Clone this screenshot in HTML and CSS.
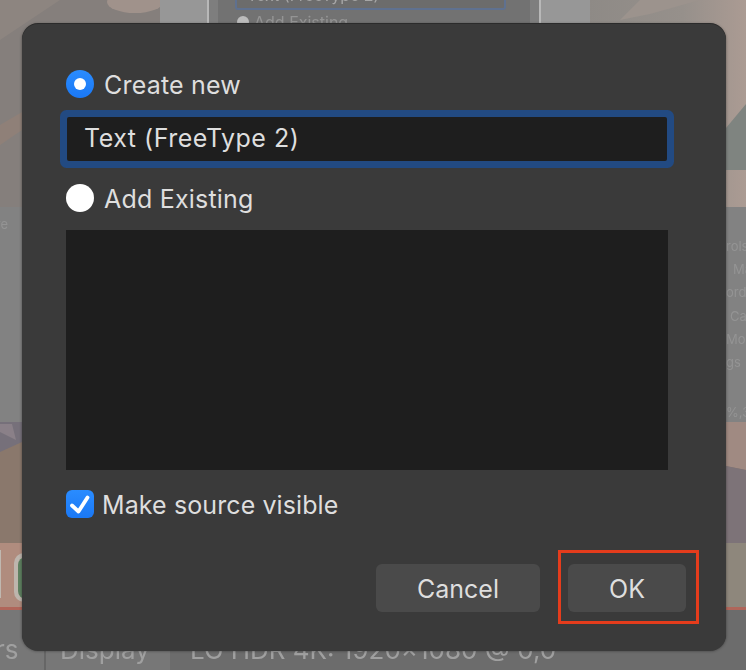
FILE: index.html
```html
<!DOCTYPE html>
<html lang="en">
  <head>
    <meta charset="UTF-8" />
    <meta name="viewport" content="width=device-width, initial-scale=1.0" />
    <title>Create or select source</title>
    <link rel="stylesheet" href="styles.css">
  </head>
  <body>
    <!-- Dimmed window and wallpaper behind the dialog -->
    <div class="backdrop">
      <svg class="wallpaper" width="746" height="670" viewBox="0 0 746 670">
        <defs>
          <linearGradient id="topRight" x1="0" x2="1" y1="0" y2="0">
            <stop offset="0" stop-color="#8e8a86" />
            <stop offset="0.6" stop-color="#96908b" />
            <stop offset="1" stop-color="#ab9b93" />
          </linearGradient>
        </defs>
        <rect width="746" height="670" fill="#8a786c" />
        <rect width="160" height="207" fill="#857f7c" />
        <polygon points="0,0 60,0 0,40" fill="#8d8580" />
        <polygon points="0,125 22,112 22,130 0,145" fill="#8f8078" />
        <ellipse cx="135" cy="2" rx="28" ry="11" fill="#a0928b" />
        <rect x="588" width="158" height="207" fill="url(#topRight)" />
        <polygon points="640,0 700,0 650,14 620,20" fill="#9c938d" />
        <polygon points="726,128 746,104 746,170 726,170" fill="#7f8480" />
        <polygon points="0,422 22,422 22,442 0,452" fill="#76707a" />
        <polygon points="0,424 12,424 16,440 0,432" fill="#8a8088" />
        <polygon points="726,422 746,422 746,470 726,466" fill="#a08a82" />
        <polygon points="726,466 746,470 746,543 726,543" fill="#7d7378" />
        <rect x="726" y="543" width="20" height="65" fill="#8e877c" />
        <rect y="543" width="22" height="65" fill="#b08c7e" />
        <rect y="550" width="1" height="48" fill="#c0b8b0" />
        <rect x="14" y="553" width="22" height="49" rx="10" fill="#bdb5ad" />
        <rect x="18" y="557" width="16" height="42" rx="8" fill="#5e8060" />
      </svg>
      <div class="panel panel-top-left"></div>
      <div class="panel panel-top-mid">
        <div class="ghost-sheet">
          <div class="ghost-input">Text (FreeType 2)</div>
          <div class="ghost-radio"><i></i>Add Existing</div>
        </div>
      </div>
      <div class="panel panel-top-right"></div>
      <div class="panel panel-left"><span class="ghost-re">re</span></div>
      <div class="panel panel-right">
        <span>rols</span>
        <span class="indent-ma">Ma</span>
        <span>ordi</span>
        <span class="indent-car">Car</span>
        <span>Mode</span>
        <span>gs</span>
        <span class="zoom-level">%,3</span>
      </div>
      <div class="red-line"></div>
      <div class="status-bar">
        <span class="status-rs">rs</span>
        <span class="status-display">Display</span>
        <span class="status-monitor">LG HDR 4K: 1920x1080 @ 0,0</span>
      </div>
    </div>

    <div class="dialog">
      <label class="option">
        <span class="radio radio-on"></span>
        <span class="option-text">Create new</span>
      </label>

      <div class="name-input">Text (FreeType 2)</div>

      <label class="option">
        <span class="radio"></span>
        <span class="option-text">Add Existing</span>
      </label>

      <div class="source-list"></div>

      <label class="option option-visible">
        <span class="checkbox">
          <svg width="28" height="28" viewBox="0 0 28 28">
            <path d="M6 15.5 L12.5 21.5 L21.5 7.5" fill="none" stroke="#fff" stroke-width="3.8" stroke-linecap="round" stroke-linejoin="round" />
          </svg>
        </span>
        <span class="option-text">Make source visible</span>
      </label>

      <div class="buttons">
        <button class="btn btn-cancel">Cancel</button>
        <div class="ok-wrap">
          <button class="btn btn-ok">OK</button>
          <!-- Annotation box around the OK button -->
          <div class="highlight"></div>
        </div>
      </div>
    </div>
  </body>
</html>
```

FILE: styles.css
```css
body {
  margin: 0;
  width: 746px;
  height: 670px;
  overflow: hidden;
  position: relative;
  font-family: Inter, "Noto Sans", sans-serif;
  background: #8a786c;
}

/* Everything behind the dialog */
.backdrop {
  position: absolute;
  inset: 0;
  color: #949494;
  filter: blur(0.6px);
}

.wallpaper {
  position: absolute;
  top: 0;
  left: 0;
  display: block;
}

.panel {
  position: absolute;
  background: #7f7f7f;
}

.panel-top-left {
  left: 160px;
  top: 0;
  width: 47px;
  height: 30px;
  background: #979797;
  border-right: 2px solid #b8b8b8;
}

.panel-top-mid {
  left: 209px;
  top: 0;
  width: 330px;
  height: 30px;
  background: #7e7e7e;
  font-size: 16px;
}

.panel-top-right {
  left: 539px;
  top: 0;
  width: 49px;
  height: 30px;
  background: #979797;
  border-left: 2px solid #b8b8b8;
}

.ghost-sheet {
  position: absolute;
  left: 9px;
  top: 0;
  width: 312px;
  height: 30px;
  background: #727272;
}

.ghost-input {
  position: absolute;
  left: 17px;
  top: -20px;
  width: 257px;
  height: 26px;
  border: 2px solid #5f7190;
  border-radius: 3px;
  background: #6c6c6c;
  padding-left: 10px;
  line-height: 26px;
  color: #a6a6a6;
}

.ghost-radio {
  position: absolute;
  left: 19px;
  top: 14px;
  display: flex;
  align-items: center;
  gap: 5px;
  line-height: 16px;
  white-space: nowrap;
}

.ghost-radio i {
  width: 12px;
  height: 12px;
  border-radius: 50%;
  background: #bcbcbc;
}

.panel-left {
  left: 0;
  top: 207px;
  width: 22px;
  height: 215px;
  background: #828282;
  font-size: 13px;
}

.ghost-re {
  position: absolute;
  right: 14px;
  top: 9px;
}

.panel-right {
  left: 726px;
  top: 207px;
  width: 20px;
  height: 215px;
  background: #828282;
  font-size: 13px;
  line-height: 16px;
  display: flex;
  flex-direction: column;
  gap: 7.2px;
  padding-top: 31px;
  box-sizing: border-box;
  white-space: nowrap;
}

.indent-ma {
  margin-left: 7px;
}

.indent-car {
  margin-left: 4px;
}

.zoom-level {
  margin-top: 27px;
}

.red-line {
  position: absolute;
  left: 0;
  top: 607px;
  width: 746px;
  height: 3px;
  background: #b0665a;
}

.status-bar {
  position: absolute;
  left: 0;
  top: 610px;
  width: 746px;
  height: 60px;
  background: #777;
  font-size: 26px;
  line-height: 32px;
  color: #a0a0a0;
}

.status-bar::before {
  content: "";
  position: absolute;
  left: 44px;
  top: 0;
  bottom: 0;
  width: 2px;
  background: #666;
}

.status-bar::after {
  content: "";
  position: absolute;
  left: 170px;
  top: 0;
  right: 0;
  bottom: 0;
  background: #6c6c6c;
}

.status-bar span {
  position: absolute;
  top: 24px;
  white-space: nowrap;
  z-index: 1;
}

.status-rs {
  left: -5px;
}

.status-display {
  left: 60px;
}

.status-monitor {
  left: 190px;
}

/* Dialog */
.dialog {
  position: absolute;
  left: 22px;
  top: 24px;
  width: 704px;
  height: 627px;
  box-sizing: border-box;
  padding: 46px 40px 39px 44px;
  display: flex;
  flex-direction: column;
  background: #3a3a3a;
  border-radius: 16px;
  box-shadow: 0 -1px 0 #2b2b2b, 0 0 3px rgba(0, 0, 0, 0.45);
  color: #dedede;
  font-size: 25px;
}

.option {
  display: flex;
  align-items: center;
  gap: 11px;
  height: 28px;
  white-space: nowrap;
}

.option-text {
  margin-top: 2px;
  margin-left: -1px;
  letter-spacing: 0.2px;
}

.radio {
  width: 28px;
  height: 28px;
  border-radius: 50%;
  background: #fff;
  position: relative;
}

.radio-on {
  background: linear-gradient(#2a8cff, #1a78f5);
}

.radio-on::after {
  content: "";
  position: absolute;
  left: 8px;
  top: 8px;
  width: 12px;
  height: 12px;
  border-radius: 50%;
  background: #fff;
}

.name-input {
  width: 600px;
  height: 44px;
  margin: 19px 0 23px 1px;
  padding-left: 17px;
  box-sizing: border-box;
  line-height: 43px;
  letter-spacing: 0.5px;
  background: #1e1e1e;
  border-radius: 2px;
  box-shadow: 0 0 0 7px #224a82;
}

.source-list {
  width: 602px;
  height: 240px;
  margin-top: 18px;
  margin-bottom: 20px;
  background: #1e1e1e;
}

.option-visible {
  gap: 9px;
}

.option-visible .option-text {
  letter-spacing: 0.1px;
}

.checkbox {
  width: 28px;
  height: 28px;
  border-radius: 6px;
  background: linear-gradient(#2a8cff, #1a78f5);
  display: flex;
}

.buttons {
  margin-top: auto;
  display: flex;
  justify-content: flex-end;
  gap: 28px;
}

.btn {
  height: 48px;
  border: none;
  border-radius: 6px;
  background: #4a4a4a;
  color: #dedede;
  font-family: inherit;
  font-size: 25px;
  padding: 2px 0 0;
}

.btn-cancel {
  width: 164px;
}

.btn-ok {
  width: 118px;
}

.ok-wrap {
  position: relative;
  display: flex;
}

.highlight {
  position: absolute;
  left: -10px;
  top: -14px;
  right: -13px;
  bottom: -12px;
  border: 3px solid #e53c1c;
}
```
